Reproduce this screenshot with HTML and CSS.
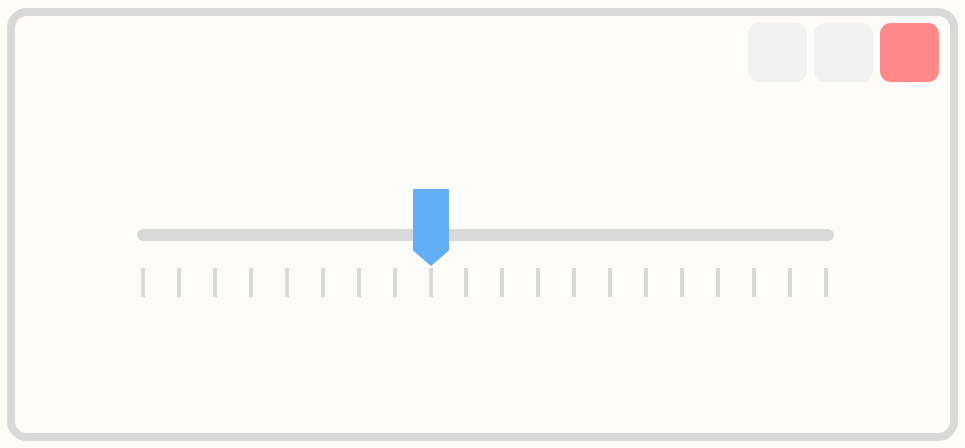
FILE: index.html
```html
<!DOCTYPE html>
<html>
<head>
<meta charset="utf-8">
<link rel="stylesheet" href="styles.css">
</head>
<body>
<div class="frame">
  <div class="toolbar">
    <div class="btn"></div>
    <div class="btn"></div>
    <div class="btn close"></div>
  </div>
  <div class="slider">
    <div class="track">
      <div class="thumb"></div>
    </div>
    <div class="ticks">
      <span class="tick"></span><span class="tick"></span><span class="tick"></span><span class="tick"></span><span class="tick"></span>
      <span class="tick"></span><span class="tick"></span><span class="tick"></span><span class="tick"></span><span class="tick"></span>
      <span class="tick"></span><span class="tick"></span><span class="tick"></span><span class="tick"></span><span class="tick"></span>
      <span class="tick"></span><span class="tick"></span><span class="tick"></span><span class="tick"></span><span class="tick"></span>
    </div>
  </div>
</div>
</body>
</html>
```

FILE: styles.css
```css
html, body {
  margin: 0;
  padding: 0;
  background: #fefcf9;
}
body {
  padding: 8px 7px 7px 7px;
  font-family: "Liberation Sans", sans-serif;
}
.frame {
  box-sizing: border-box;
  width: 951px;
  height: 433px;
  border: 8px solid #d9d9d9;
  border-radius: 20px;
  background: #fefcf9;
  display: flex;
  flex-direction: column;
}
.toolbar {
  display: flex;
  justify-content: flex-end;
  gap: 7px;
  padding: 7px 11px 0 0;
}
.btn {
  width: 59px;
  height: 59px;
  border-radius: 11px;
  background: #f2f2f2;
}
.btn.close {
  background: #ff8888;
}
.slider {
  margin: 147px 0 0 122px;
  width: 697px;
}
.track {
  position: relative;
  height: 12px;
  border-radius: 6px;
  background: #d9d9d9;
}
.thumb {
  position: absolute;
  left: 276px;
  top: -40px;
  width: 36px;
  height: 77px;
  background: #63aff6;
  clip-path: polygon(0 0, 100% 0, 100% 80%, 50% 100%, 0 80%);
}
.ticks {
  display: flex;
  justify-content: space-between;
  margin: 27px 0 0 4px;
  width: 687px;
}
.tick {
  width: 4px;
  height: 29px;
  background: #d9d9d9;
}
```
